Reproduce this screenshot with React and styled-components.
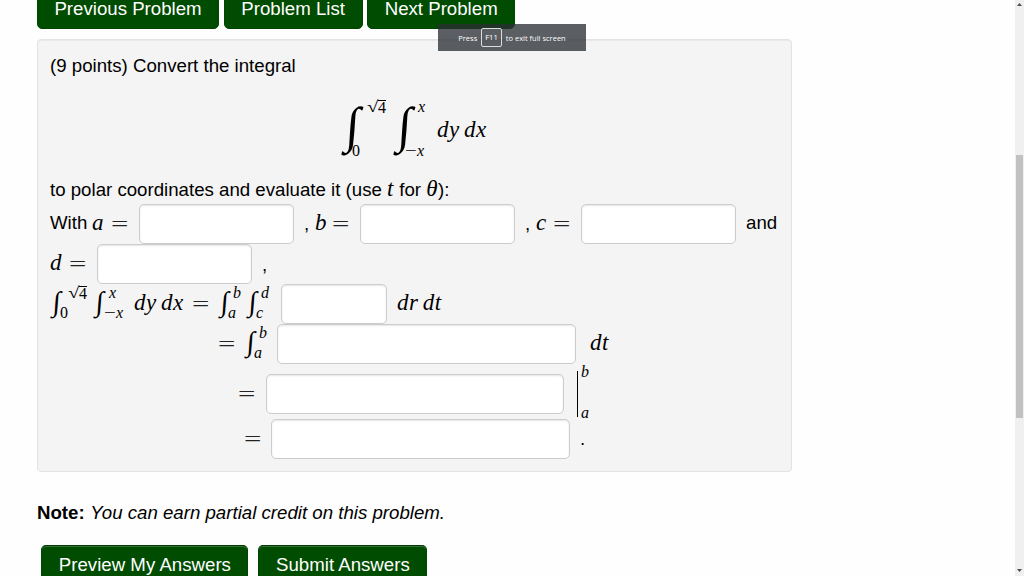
import styled, { createGlobalStyle } from "styled-components";

const GlobalStyle = createGlobalStyle`
  * {
    box-sizing: border-box;
  }

  body {
    margin: 0;
    overflow: hidden;
    background: #fefefe;
    color: #000;
    font-family: "Liberation Sans", Arial, sans-serif;
    font-size: 18.67px;
  }
`;

const Integral = ({ upper, lower, gap, shift, w, display }) => (
  <IntegralBox $w={w} $display={display}>
    <Sign $display={display}>
      <span>∫</span>
    </Sign>
    <Limits>
      <Limit $left={shift + gap}>{upper}</Limit>
      <Limit $left={shift}>{lower}</Limit>
    </Limits>
  </IntegralBox>
);

const Root = () => (
  <Radical>
    <b>√</b>
    <span>4</span>
  </Radical>
);

const Minus = () => (
  <>
    <MinusSign>−</MinusSign>
    <i>x</i>
  </>
);

const App = () => {
  return (
    <Page>
      <GlobalStyle />
      <Content>
        <Nav>
          <Button $w={182}>Previous Problem</Button>
          <Button $w={139}>Problem List</Button>
          <Button $w={148}>Next Problem</Button>
        </Nav>

        <Problem>
          <Line $h={52}>(9 points) Convert the integral</Line>
          <Formula>
            <Integral display w={52} shift={11} gap={15} upper={<Root />} lower="0" />
            <Integral display w={44} shift={12} gap={13} upper={<i>x</i>} lower={<Minus />} />
            <Math $w={60}>
              dy<Thin />dx
            </Math>
          </Formula>
          <Line $h={28}>
            to polar coordinates and evaluate it (use&nbsp;<Math>t</Math>&nbsp;for&nbsp;
            <Math>θ</Math>):
          </Line>

          <Line $h={40}>
            <Text $w={42} $bottom={2}>With</Text>
            <Math $w={19}>a</Math>
            <Equals $w={28}>=</Equals>
            <Input $w={155} />
            <Text $w={11} $left={10}>,</Text>
            <Math $w={17}>b</Math>
            <Equals $w={28}>=</Equals>
            <Input $w={155} />
            <Text $w={11} $left={10}>,</Text>
            <Math $w={17}>c</Math>
            <Equals $w={28}>=</Equals>
            <Input $w={155} />
            <Text $w={40} $left={10} $bottom={2}>and</Text>
          </Line>

          <Line $h={40}>
            <Math $w={19}>d</Math>
            <Equals $w={28}>=</Equals>
            <Input $w={155} />
            <Text $w={20} $left={10} $top={2}>,</Text>
          </Line>

          <Line $h={40}>
            <Integral w={43} shift={10} gap={8} upper={<Root />} lower="0" />
            <Integral w={41} shift={11} gap={5} upper={<i>x</i>} lower={<Minus />} />
            <Math $w={58}>
              dy<Thin />dx
            </Math>
            <Equals $w={26}>=</Equals>
            <Integral w={28} shift={10} gap={5} upper={<i>b</i>} lower={<i>a</i>} />
            <Integral w={34.5} shift={10} gap={5} upper={<i>d</i>} lower={<i>c</i>} />
            <Input $w={106.5} />
            <Math $w={60} $left={10}>
              dr<Thin />dt
            </Math>
          </Line>

          <Line $h={40} $indent={168}>
            <Equals $w={26}>=</Equals>
            <Integral w={33} shift={10} gap={5} upper={<i>b</i>} lower={<i>a</i>} />
            <Input $w={299} />
            <Math $w={40} $left={14}>dt</Math>
          </Line>

          <Line $h={60} $indent={188}>
            <Equals $w={28}>=</Equals>
            <Input $w={298} />
            <Evaluated>
              <i>b</i>
              <i>a</i>
            </Evaluated>
          </Line>

          <Line $h={30} $indent={194}>
            <Equals $w={27}>=</Equals>
            <Input $w={299} />
            <Text $w={20} $left={10}>.</Text>
          </Line>
        </Problem>

        <Note>
          <b>Note:</b> <i>You can earn partial credit on this problem.</i>
        </Note>

        <Actions>
          <Button $w={207} $raised>Preview My Answers</Button>
          <Button $w={169} $raised>Submit Answers</Button>
        </Actions>
      </Content>

      <Scrollbar>
        <Arrow viewBox="0 0 5 3">
          <path d="M0 3L2.5 0L5 3Z" />
        </Arrow>
        <Thumb />
        <Arrow viewBox="0 0 5 3">
          <path d="M0 0H5L2.5 3Z" />
        </Arrow>
      </Scrollbar>

      <FullScreenHint>
        Press <kbd>F11</kbd> to exit full screen
      </FullScreenHint>
    </Page>
  );
};

const Page = styled.div`
  position: relative;
  display: flex;
  justify-content: space-between;
  width: 1024px;
  height: 576px;
  overflow: hidden;
`;

const Content = styled.main`
  width: 755px;
  margin-left: 37px;
`;

const Nav = styled.nav`
  display: flex;
  gap: 4.6px;
  height: 29px;
  align-items: flex-end;
`;

const Button = styled.button`
  flex: none;
  width: ${(p) => p.$w}px;
  height: 40px;
  padding: 0;
  border: 1px solid #004600;
  border-top-color: ${(p) => (p.$raised ? "#003c00" : "#004600")};
  border-radius: 5px;
  background: #004c00;
  box-shadow: ${(p) => (p.$raised ? "inset 0 1px 0 rgba(255, 255, 255, 0.2)" : "none")};
  color: #fff;
  font: 18.67px/38px "Liberation Sans", Arial, sans-serif;
  white-space: nowrap;
`;

const Problem = styled.section`
  height: 433px;
  margin-top: 10px;
  padding-left: 12px;
  border: 1px solid #e3e3e3;
  border-radius: 4px;
  background: #f4f4f4;
  box-shadow: inset 0 1px 1px rgba(0, 0, 0, 0.05);
`;

const Line = styled.div`
  display: flex;
  align-items: center;
  height: ${(p) => p.$h}px;
  padding-left: ${(p) => p.$indent || 0}px;
  line-height: 24px;
  white-space: nowrap;
`;

const Formula = styled.div`
  display: flex;
  align-items: center;
  height: 84px;
  padding: 0 0 6px 291px;
`;

const Text = styled.span`
  flex: none;
  width: ${(p) => p.$w}px;
  margin-left: ${(p) => p.$left || 0}px;
  padding-top: ${(p) => p.$top || 0}px;
  padding-bottom: ${(p) => p.$bottom || 0}px;
`;

const Math = styled.span`
  flex: none;
  width: ${(p) => (p.$w ? `${p.$w}px` : "auto")};
  margin-left: ${(p) => p.$left || 0}px;
  padding-bottom: 2px;
  font: italic 23px/24px "Liberation Serif", "Times New Roman", serif;
  letter-spacing: 0.6px;
`;

const Thin = styled.span`
  display: inline-block;
  width: 4px;
`;

const Equals = styled.span`
  flex: none;
  width: ${(p) => p.$w}px;
  padding-bottom: 1px;
  font: 22px/24px "Liberation Serif", "Times New Roman", serif;
  color: #222;
  transform: scaleX(1.4);
  transform-origin: left;
`;

const IntegralBox = styled.span`
  flex: none;
  display: flex;
  width: ${(p) => p.$w}px;
  height: ${(p) => (p.$display ? 58 : 34)}px;
  margin-bottom: ${(p) => (p.$display ? 4 : 2)}px;
  font-family: "Liberation Serif", "Times New Roman", serif;
`;

const Sign = styled.span`
  flex: none;
  display: flex;
  align-items: center;
  width: 0;
  padding-bottom: ${(p) => (p.$display ? 8 : 2)}px;
  font: ${(p) => (p.$display ? 50 : 28)}px/1 "Liberation Serif", serif;

  span {
    margin-left: ${(p) => (p.$display ? 5 : 3)}px;
    transform: skewX(-4deg);
  }
`;

const Limits = styled.span`
  display: flex;
  flex-direction: column;
  justify-content: space-between;
  font-size: 16px;
  line-height: 14px;
`;

const Limit = styled.span`
  margin-left: ${(p) => p.$left}px;
  white-space: nowrap;
`;

const Radical = styled.span`
  display: inline-flex;

  b {
    width: 11px;
    font-weight: normal;
    transform: scaleX(1.3);
    transform-origin: left;
  }

  span {
    height: 14px;
    border-top: 1px solid #000;
  }
`;

const MinusSign = styled.span`
  display: inline-block;
  width: 12px;
  transform: scaleX(1.3);
  transform-origin: left;
`;

const Input = styled.input`
  flex: none;
  width: ${(p) => p.$w}px;
  height: 40px;
  padding: 0;
  border: 1px solid #ccc;
  border-radius: 5px;
  background: #fff;
  box-shadow: inset 0 1px 2px rgba(0, 0, 0, 0.1);
`;

const Evaluated = styled.span`
  display: flex;
  flex-direction: column;
  justify-content: space-between;
  height: 46px;
  margin-left: 13px;
  padding-left: 3px;
  border-left: 1px solid #000;
  font: 16px/8px "Liberation Serif", "Times New Roman", serif;

  i:first-child {
    margin-top: -3px;
  }
`;

const Note = styled.p`
  margin: 29px 0 0;
  line-height: 24px;
  white-space: nowrap;

  i {
    margin-left: 0.5px;
  }
`;

const Actions = styled.div`
  display: flex;
  gap: 10px;
  margin: 20px 0 0 4.4px;
`;

const Scrollbar = styled.aside`
  display: flex;
  flex-direction: column;
  align-items: center;
  justify-content: space-between;
  width: 9px;
  height: 576px;
  padding: 3px 0 4px;
  background: #f0f0f0;
`;

const Arrow = styled.svg`
  width: 5px;
  height: 3px;
  fill: #505050;
`;

const Thumb = styled.div`
  width: 7px;
  height: 263px;
  margin-bottom: 3px;
  background: #c1c1c1;
`;

const FullScreenHint = styled.div`
  position: absolute;
  top: 24px;
  left: 438px;
  display: flex;
  align-items: center;
  justify-content: center;
  gap: 4px;
  width: 148px;
  height: 27px;
  background: rgba(42, 46, 52, 0.77);
  color: #fff;
  font: 7.5px "Open Sans", sans-serif;

  kbd {
    height: 19px;
    padding: 0 3px;
    border: 1px solid #ddd;
    border-radius: 2px;
    font: 7.6px/17px "Open Sans", sans-serif;
  }
`;

export default App;
